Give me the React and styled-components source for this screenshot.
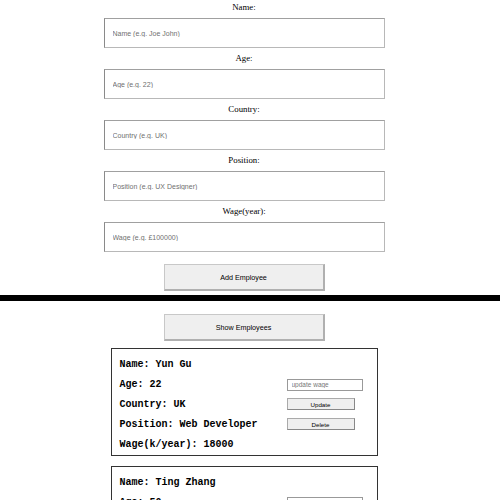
import styled, { createGlobalStyle } from "styled-components";

const employees = [
  { name: "Yun Gu", age: 22, country: "UK", position: "Web Developer", wage: 18000 },
  { name: "Ting Zhang", age: 50, country: "China", position: "Manager", wage: 40000 },
];

const fields = [
  { label: "Name:", placeholder: "Name (e.g. Joe John)" },
  { label: "Age:", placeholder: "Age (e.g. 22)" },
  { label: "Country:", placeholder: "Country (e.g. UK)" },
  { label: "Position:", placeholder: "Position (e.g. UX Designer)" },
  { label: "Wage(year):", placeholder: "Wage (e.g. £100000)" },
];

const App = () => {
  return (
    <>
      <GlobalStyle />
      <Column>
        <Form>
          {fields.map((f) => (
            <Field key={f.label}>
              <Label>{f.label}</Label>
              <TextInput type="text" placeholder={f.placeholder} />
            </Field>
          ))}
          <BigButton>Add Employee</BigButton>
        </Form>
      </Column>

      <Divider />

      <Column>
        <ShowButton>Show Employees</ShowButton>
        <CardList>
          {employees.map((emp) => (
            <Card key={emp.name}>
              <Row>
                <Info>Name: {emp.name}</Info>
              </Row>
              <Row>
                <Info>Age: {emp.age}</Info>
                <Slot>
                  <WageInput type="text" placeholder="update wage" />
                </Slot>
              </Row>
              <Row>
                <Info>Country: {emp.country}</Info>
                <Slot>
                  <SmallButton>Update</SmallButton>
                </Slot>
              </Row>
              <Row>
                <Info>Position: {emp.position}</Info>
                <Slot>
                  <SmallButton>Delete</SmallButton>
                </Slot>
              </Row>
              <Row>
                <Info>Wage(k/year): {emp.wage}</Info>
              </Row>
            </Card>
          ))}
        </CardList>
      </Column>
    </>
  );
};

const GlobalStyle = createGlobalStyle`
  body {
    margin: 0;
    background: #fff;
    font-family: "Liberation Serif", serif;
  }
`;

const Column = styled.div`
  display: flex;
  flex-direction: column;
  align-items: center;
  padding-right: 12px;
`;

const Form = styled.div`
  display: flex;
  flex-direction: column;
  align-items: center;
`;

const Field = styled.div`
  display: flex;
  flex-direction: column;
  align-items: center;
  margin-bottom: 3px;
`;

const Label = styled.label`
  font-family: "Liberation Serif", serif;
  font-size: 8.8px;
  line-height: 15px;
  margin-bottom: 3px;
  color: #000;
`;

const TextInput = styled.input`
  box-sizing: border-box;
  width: 281px;
  height: 30px;
  padding: 0 8px;
  font-family: "Liberation Sans", Arial, sans-serif;
  font-size: 7px;
  border: 1px solid #b8b8b8;
  border-left-color: #8a8a8a;
  border-top-color: #a0a0a0;
  border-radius: 0;
  outline: none;

  &::placeholder {
    color: #707070;
  }
`;

const BigButton = styled.button`
  box-sizing: border-box;
  width: 161px;
  height: 27px;
  margin-top: 9px;
  background: #efefef;
  border: 1px solid #c8c8c8;
  border-right: 2px solid #b0b0b0;
  border-bottom: 2px solid #b0b0b0;
  font-family: "Liberation Sans", Arial, sans-serif;
  font-size: 7.2px;
  color: #000;
  cursor: pointer;
`;

const ShowButton = styled(BigButton)`
  margin-top: 13px;
`;

const Divider = styled.div`
  height: 6px;
  background: #000;
  margin-top: 4px;
`;

const CardList = styled.div`
  display: flex;
  flex-direction: column;
  gap: 10px;
  margin-top: 7px;
`;

const Card = styled.div`
  box-sizing: border-box;
  width: 267px;
  padding: 6px 14px 1px 8px;
  border: 1px solid #333;
`;

const Row = styled.div`
  display: flex;
  align-items: center;
  justify-content: space-between;
  height: 19.8px;
`;

const Info = styled.span`
  font-family: "Liberation Mono", "Courier New", monospace;
  font-weight: bold;
  font-size: 10px;
  color: #000;
`;

const Slot = styled.div`
  width: 76px;
  display: flex;
`;

const WageInput = styled.input`
  box-sizing: border-box;
  width: 76px;
  height: 12px;
  padding: 0 4px;
  font-family: "Liberation Sans", Arial, sans-serif;
  font-size: 6.5px;
  border: 1px solid #999;
  border-radius: 0;
  outline: none;

  &::placeholder {
    color: #777;
  }
`;

const SmallButton = styled.button`
  box-sizing: border-box;
  width: 68px;
  height: 12px;
  padding: 0;
  background: #efefef;
  border: 1px solid #aaa;
  border-right-color: #888;
  border-bottom-color: #888;
  font-family: "Liberation Sans", Arial, sans-serif;
  font-size: 6.2px;
  color: #000;
  cursor: pointer;
`;

export default App;
